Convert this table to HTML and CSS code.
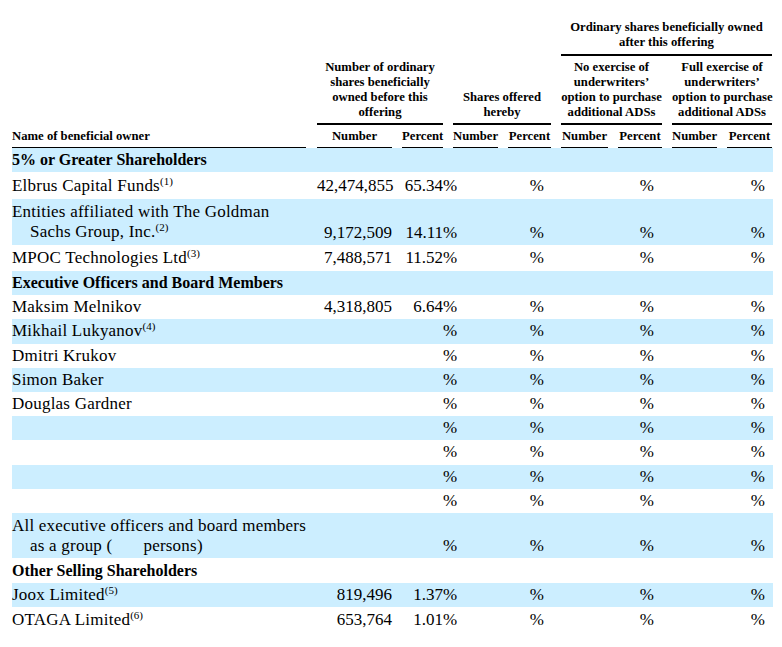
FILE: index.html
```html
<!DOCTYPE html>
<html>
<head>
<meta charset="utf-8">
<link rel="stylesheet" href="styles.css">
</head>
<body>
<div class="wrap">
<table class="own">
  <colgroup>
    <col class="c-name"><col class="c-num"><col class="c-pct"><col class="c-num2"><col class="c-pct2"><col class="c-num3"><col class="c-pct3"><col class="c-num4"><col class="c-pct4">
  </colgroup>
  <thead>
    <tr class="h1">
      <th class="first"></th><th></th><th></th><th></th><th></th>
      <th colspan="4" class="last"><div class="hb thick">Ordinary shares beneficially owned<br>after this offering</div></th>
    </tr>
    <tr class="h2">
      <th class="first"></th>
      <th colspan="2"><div class="hb thick">Number of ordinary<br>shares beneficially<br>owned before this<br>offering</div></th>
      <th colspan="2"><div class="hb thick">Shares offered<br>hereby</div></th>
      <th colspan="2"><div class="hb thick">No exercise of<br>underwriters’<br>option to purchase<br>additional ADSs</div></th>
      <th colspan="2" class="last"><div class="hb thick">Full exercise of<br>underwriters’<br>option to purchase<br>additional ADSs</div></th>
    </tr>
    <tr class="h3">
      <th class="first left"><div class="hb thin">Name of beneficial owner</div></th>
      <th><div class="hb thin">Number</div></th>
      <th><div class="hb thin">Percent</div></th>
      <th><div class="hb thin">Number</div></th>
      <th><div class="hb thin">Percent</div></th>
      <th><div class="hb thin">Number</div></th>
      <th><div class="hb thin">Percent</div></th>
      <th><div class="hb thin">Number</div></th>
      <th class="last"><div class="hb thin">Percent</div></th>
    </tr>
  </thead>
  <tbody>
    <tr class="b r24"><td class="first sec">5% or Greater Shareholders</td><td></td><td></td><td></td><td></td><td></td><td></td><td></td><td class="last"></td></tr>
    <tr class="r27"><td class="first name">Elbrus Capital Funds<sup>(1)</sup></td><td class="n">42,474,855</td><td class="n">65.34<span class="hang">%</span></td><td></td><td class="n pe">%</td><td></td><td class="n pg">%</td><td></td><td class="n last pi">%</td></tr>
    <tr class="b r46"><td class="first name">Entities affiliated with The Goldman<br>Sachs Group, Inc.<sup>(2)</sup></td><td class="n bot">9,172,509</td><td class="n bot">14.11<span class="hang">%</span></td><td></td><td class="n pe bot">%</td><td></td><td class="n pg bot">%</td><td></td><td class="n last pi bot">%</td></tr>
    <tr class="r26"><td class="first name">MPOC Technologies Ltd<sup>(3)</sup></td><td class="n">7,488,571</td><td class="n">11.52<span class="hang">%</span></td><td></td><td class="n pe">%</td><td></td><td class="n pg">%</td><td></td><td class="n last pi">%</td></tr>
    <tr class="b r242"><td class="first sec">Executive Officers and Board Members</td><td></td><td></td><td></td><td></td><td></td><td></td><td></td><td class="last"></td></tr>
    <tr class="r242"><td class="first name">Maksim Melnikov</td><td class="n">4,318,805</td><td class="n">6.64<span class="hang">%</span></td><td></td><td class="n pe">%</td><td></td><td class="n pg">%</td><td></td><td class="n last pi">%</td></tr>
    <tr class="b r242"><td class="first name">Mikhail Lukyanov<sup>(4)</sup></td><td></td><td class="n"><span class="hang">%</span></td><td></td><td class="n pe">%</td><td></td><td class="n pg">%</td><td></td><td class="n last pi">%</td></tr>
    <tr class="r242"><td class="first name">Dmitri Krukov</td><td></td><td class="n"><span class="hang">%</span></td><td></td><td class="n pe">%</td><td></td><td class="n pg">%</td><td></td><td class="n last pi">%</td></tr>
    <tr class="b r242"><td class="first name">Simon Baker</td><td></td><td class="n"><span class="hang">%</span></td><td></td><td class="n pe">%</td><td></td><td class="n pg">%</td><td></td><td class="n last pi">%</td></tr>
    <tr class="r242"><td class="first name">Douglas Gardner</td><td></td><td class="n"><span class="hang">%</span></td><td></td><td class="n pe">%</td><td></td><td class="n pg">%</td><td></td><td class="n last pi">%</td></tr>
    <tr class="b r242"><td class="first name"></td><td></td><td class="n"><span class="hang">%</span></td><td></td><td class="n pe">%</td><td></td><td class="n pg">%</td><td></td><td class="n last pi">%</td></tr>
    <tr class="r242"><td class="first name"></td><td></td><td class="n"><span class="hang">%</span></td><td></td><td class="n pe">%</td><td></td><td class="n pg">%</td><td></td><td class="n last pi">%</td></tr>
    <tr class="b r242"><td class="first name"></td><td></td><td class="n"><span class="hang">%</span></td><td></td><td class="n pe">%</td><td></td><td class="n pg">%</td><td></td><td class="n last pi">%</td></tr>
    <tr class="r242"><td class="first name"></td><td></td><td class="n"><span class="hang">%</span></td><td></td><td class="n pe">%</td><td></td><td class="n pg">%</td><td></td><td class="n last pi">%</td></tr>
    <tr class="b r455"><td class="first name">All executive officers and board members<br>as a group (<span class="blank"></span>persons)</td><td></td><td class="n bot"><span class="hang">%</span></td><td></td><td class="n pe bot">%</td><td></td><td class="n pg bot">%</td><td></td><td class="n last pi bot">%</td></tr>
    <tr class="r245"><td class="first sec">Other Selling Shareholders</td><td></td><td></td><td></td><td></td><td></td><td></td><td></td><td class="last"></td></tr>
    <tr class="b r245"><td class="first name">Joox Limited<sup>(5)</sup></td><td class="n">819,496</td><td class="n">1.37<span class="hang">%</span></td><td></td><td class="n pe">%</td><td></td><td class="n pg">%</td><td></td><td class="n last pi">%</td></tr>
    <tr class="r245"><td class="first name">OTAGA Limited<sup>(6)</sup></td><td class="n">653,764</td><td class="n">1.01<span class="hang">%</span></td><td></td><td class="n pe">%</td><td></td><td class="n pg">%</td><td></td><td class="n last pi">%</td></tr>
  </tbody>
</table>
</div>
</body>
</html>
```

FILE: styles.css
```css
html, body {
  margin: 0;
  padding: 0;
  background: #ffffff;
}

.wrap {
  padding: 20px 0 0 12px;
  font-family: "Liberation Serif", "Times New Roman", serif;
  color: #000000;
}

.own {
  border-collapse: separate;
  border-spacing: 0;
  table-layout: fixed;
  width: 761px;
}

.c-name { width: 300px; }
.c-num { width: 85px; }
.c-pct { width: 51px; }
.c-num2 { width: 55px; }
.c-pct2 { width: 53px; }
.c-num3 { width: 57px; }
.c-pct3 { width: 54px; }
.c-num4 { width: 55px; }
.c-pct4 { width: 51px; }

.own th, .own td {
  padding: 0 5px;
}

.own .first { padding: 0 6px 0 0; }
.own .last { padding: 0 1px 0 5px; }

/* header */
.own th {
  font-size: 12.7px;
  line-height: 15px;
  font-weight: bold;
  text-align: center;
  vertical-align: bottom;
  white-space: nowrap;
}

.own th.left { text-align: left; }

.h2 th { padding-top: 4px; }
.h3 th { padding-top: 4px; }

.hb.thick {
  border-bottom: 2px solid #000;
  padding-bottom: 3px;
}
.h1 .hb.thick { padding-bottom: 4px; }

.hb.thin {
  border-bottom: 1px solid #000;
  padding-bottom: 3px;
}

/* body */
.own td {
  font-size: 17px;
  line-height: 20px;
  vertical-align: middle;
  white-space: nowrap;
}

.own tr.b td { background: #cceeff; }

.own td.sec {
  font-weight: bold;
  font-size: 16px;
}

.own td.name {
  padding-left: 18px;
  text-indent: -18px;
  letter-spacing: 0.22px;
}

.own td.n { text-align: right; }
.own td.bot { vertical-align: bottom; padding-bottom: 2px; }

.own td.pe { padding-right: 12px; }
.own td.pg { padding-right: 13px; }
.own td.pi { padding-right: 8px; }

.hang {
  display: inline-block;
  width: 0;
  text-indent: 0;
}

.blank {
  display: inline-block;
  width: 31px;
}

sup {
  font-size: 11px;
  line-height: 0;
  vertical-align: 6px;
  text-indent: 0;
  letter-spacing: 0;
}

.r24 { height: 24px; }
.r27 { height: 27px; }
.r46 { height: 46px; }
.r26 { height: 26px; }
.r242 { height: 24.2px; }
.r455 { height: 45.5px; }
.r245 { height: 24.5px; }
```
